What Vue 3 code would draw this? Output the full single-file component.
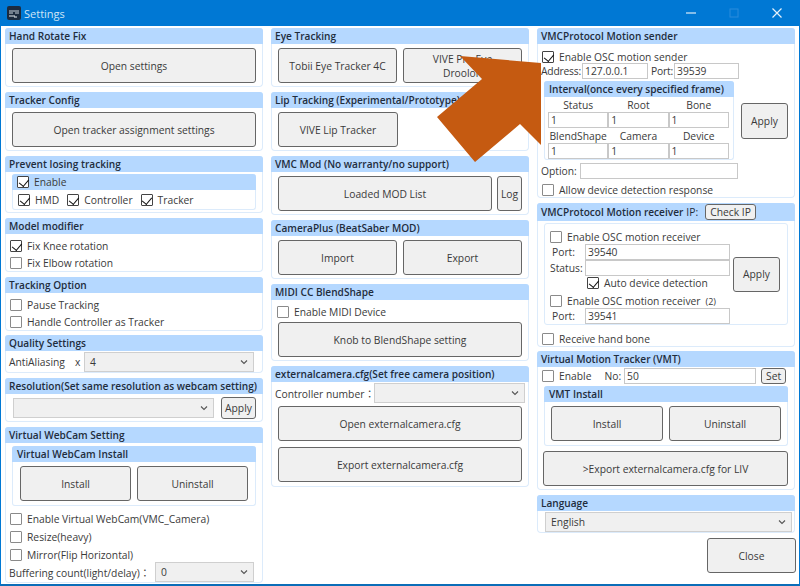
<script setup>
const intervals = [
  { label: 'Status', value: '1' },
  { label: 'Root', value: '1' },
  { label: 'Bone', value: '1' },
  { label: 'BlendShape', value: '1' },
  { label: 'Camera', value: '1' },
  { label: 'Device', value: '1' }
]
</script>

<template>
  <div class="window">
    <div class="titlebar">
      <div class="app-icon">
        <svg width="14" height="14" viewBox="0 0 14 14">
          <rect width="14" height="14" rx="2" fill="#1c2b3f" />
          <path d="M2 5h10M2 7h4M8 7h4" stroke="#c9d3dd" stroke-width="1" />
          <path d="M3 9v2M5 9v2M7 9v2h3" stroke="#e8eef3" stroke-width="1" fill="none" />
        </svg>
      </div>
      <span class="title">Settings</span>
      <div class="win-btns">
        <svg width="12" height="12" viewBox="0 0 12 12"><path d="M1 6h10" stroke="#dcebf7" stroke-width="1.2" /></svg>
        <svg width="12" height="12" viewBox="0 0 12 12"><rect x="2" y="2" width="8" height="8" fill="none" stroke="#2a8bdb" stroke-width="1" /></svg>
        <svg width="12" height="12" viewBox="0 0 12 12"><path d="M1.5 1.5l9 9M10.5 1.5l-9 9" stroke="#e6f1fa" stroke-width="1.2" /></svg>
      </div>
    </div>

    <div class="columns">
      <div class="column">
        <section class="card">
          <h3 class="head">Hand Rotate Fix</h3>
          <div class="body"><button class="btn">Open settings</button></div>
        </section>
        <section class="card">
          <h3 class="head">Tracker Config</h3>
          <div class="body"><button class="btn">Open tracker assignment settings</button></div>
        </section>
        <section class="card prevent">
          <h3 class="head">Prevent losing tracking</h3>
          <div class="body tight">
            <div class="group">
              <div class="head sub"><label class="chk"><input type="checkbox" checked />Enable</label></div>
              <div class="chk-row">
                <label class="chk"><input type="checkbox" checked />HMD</label>
                <label class="chk"><input type="checkbox" checked />Controller</label>
                <label class="chk"><input type="checkbox" checked />Tracker</label>
              </div>
            </div>
          </div>
        </section>
        <section class="card">
          <h3 class="head">Model modifier</h3>
          <div class="body rows">
            <label class="chk"><input type="checkbox" checked />Fix Knee rotation</label>
            <label class="chk"><input type="checkbox" />Fix Elbow rotation</label>
          </div>
        </section>
        <section class="card">
          <h3 class="head">Tracking Option</h3>
          <div class="body rows">
            <label class="chk"><input type="checkbox" />Pause Tracking</label>
            <label class="chk"><input type="checkbox" />Handle Controller as Tracker</label>
          </div>
        </section>
        <section class="card quality">
          <h3 class="head">Quality Settings</h3>
          <div class="aa-row">
            <span class="aa-label">AntiAliasing</span>
            <span class="aa-x">x</span>
            <div class="select aa-select">
              <span>4</span>
              <svg width="8" height="6" viewBox="0 0 8 6"><path d="M1 1.5l3 3 3-3" fill="none" stroke="#555" stroke-width="1.1" /></svg>
            </div>
          </div>
        </section>
        <section class="card">
          <h3 class="head">Resolution(Set same resolution as webcam setting)</h3>
          <div class="res-row">
            <div class="select res-select">
              <span></span>
              <svg width="8" height="6" viewBox="0 0 8 6"><path d="M1 1.5l3 3 3-3" fill="none" stroke="#555" stroke-width="1.1" /></svg>
            </div>
            <button class="btn small res-apply">Apply</button>
          </div>
        </section>
        <section class="card">
          <h3 class="head">Virtual WebCam Setting</h3>
          <div class="cam-body">
            <div class="group">
              <div class="head sub">Virtual WebCam Install</div>
              <div class="btn-pair">
                <button class="btn">Install</button>
                <button class="btn">Uninstall</button>
              </div>
            </div>
            <div class="cam-rows">
              <label class="chk"><input type="checkbox" />Enable Virtual WebCam(VMC_Camera)</label>
              <label class="chk"><input type="checkbox" />Resize(heavy)</label>
              <label class="chk"><input type="checkbox" />Mirror(Flip Horizontal)</label>
            </div>
            <div class="buffer-row">
              <span>Buffering count(light/delay)：</span>
              <div class="select buffer-select">
                <span>0</span>
                <svg width="8" height="6" viewBox="0 0 8 6"><path d="M1 1.5l3 3 3-3" fill="none" stroke="#555" stroke-width="1.1" /></svg>
              </div>
            </div>
          </div>
        </section>
      </div>

      <div class="column">
        <section class="card">
          <h3 class="head">Eye Tracking</h3>
          <div class="body btn-pair">
            <button class="btn">Tobii Eye Tracker 4C</button>
            <button class="btn">VIVE Pro Eye<br />Droolon</button>
          </div>
        </section>
        <section class="card">
          <h3 class="head">Lip Tracking (Experimental/Prototype)</h3>
          <div class="body btn-pair">
            <button class="btn">VIVE Lip Tracker</button>
            <div class="spacer"></div>
          </div>
        </section>
        <section class="card">
          <h3 class="head">VMC Mod (No warranty/no support)</h3>
          <div class="body mod-row">
            <button class="btn">Loaded MOD List</button>
            <button class="btn log-btn">Log</button>
          </div>
        </section>
        <section class="card">
          <h3 class="head">CameraPlus (BeatSaber MOD)</h3>
          <div class="body btn-pair">
            <button class="btn">Import</button>
            <button class="btn">Export</button>
          </div>
        </section>
        <section class="card">
          <h3 class="head">MIDI CC BlendShape</h3>
          <div class="body midi-body">
            <label class="chk midi-chk"><input type="checkbox" />Enable MIDI Device</label>
            <button class="btn">Knob to BlendShape setting</button>
          </div>
        </section>
        <section class="card">
          <h3 class="head">externalcamera.cfg(Set free camera position)</h3>
          <div class="ext-body">
            <div class="ext-row">
              <span class="ext-label">Controller number：</span>
              <div class="select ext-select">
                <span></span>
                <svg width="8" height="6" viewBox="0 0 8 6"><path d="M1 1.5l3 3 3-3" fill="none" stroke="#555" stroke-width="1.1" /></svg>
              </div>
            </div>
            <button class="btn">Open externalcamera.cfg</button>
            <button class="btn">Export externalcamera.cfg</button>
          </div>
        </section>
      </div>

      <div class="column">
        <section class="card">
          <h3 class="head">VMCProtocol Motion sender</h3>
          <div class="sender">
            <label class="chk sender-chk"><input type="checkbox" checked />Enable OSC motion sender</label>
            <div class="addr-row">
              <span>Address:</span>
              <input class="field addr" value="127.0.0.1" />
              <span class="port-label">Port:</span>
              <input class="field port" value="39539" />
            </div>
            <div class="interval-row">
              <div class="group interval">
                <div class="head sub">Interval(once every specified frame)</div>
                <div class="interval-grid">
                  <div v-for="item in intervals" :key="item.label" class="interval-item">
                    <span>{{ item.label }}</span>
                    <input class="field" :value="item.value" />
                  </div>
                </div>
              </div>
              <button class="btn small apply">Apply</button>
            </div>
            <div class="option-row">
              <span>Option:</span>
              <input class="field option" />
            </div>
            <label class="chk sender-chk"><input type="checkbox" />Allow device detection response</label>
          </div>
        </section>

        <section class="card">
          <h3 class="head recv-head">
            <span>VMCProtocol Motion receiver</span>
            <span class="ip-label">IP:</span>
            <button class="btn small check-ip">Check IP</button>
          </h3>
          <div class="sender">
            <div class="group recv">
              <div class="recv-left">
                <label class="chk"><input type="checkbox" />Enable OSC motion receiver</label>
                <div class="recv-field"><span>Port:</span><input class="field" value="39540" /></div>
                <div class="recv-field status"><span>Status:</span><input class="field" /></div>
                <label class="chk auto"><input type="checkbox" checked />Auto device detection</label>
                <label class="chk second"><input type="checkbox" />Enable OSC motion receiver<small>(2)</small></label>
                <div class="recv-field"><span>Port:</span><input class="field" value="39541" /></div>
              </div>
              <button class="btn small recv-apply">Apply</button>
            </div>
            <label class="chk sender-chk hand"><input type="checkbox" />Receive hand bone</label>
          </div>
        </section>

        <section class="card vmt">
          <h3 class="head">Virtual Motion Tracker (VMT)</h3>
          <div class="sender vmt-body">
            <div class="vmt-row">
              <label class="chk"><input type="checkbox" />Enable</label>
              <span class="no-label">No:</span>
              <input class="field" value="50" />
              <button class="btn small set">Set</button>
            </div>
            <div class="group vmt-group">
              <div class="head sub">VMT Install</div>
              <div class="btn-pair">
                <button class="btn">Install</button>
                <button class="btn">Uninstall</button>
              </div>
            </div>
            <button class="btn liv">&gt;Export externalcamera.cfg for LIV</button>
          </div>
        </section>

        <section class="card">
          <h3 class="head">Language</h3>
          <div class="lang">
            <div class="select">
              <span>English</span>
              <svg width="8" height="6" viewBox="0 0 8 6"><path d="M1 1.5l3 3 3-3" fill="none" stroke="#555" stroke-width="1.1" /></svg>
            </div>
          </div>
        </section>

        <div class="close-row">
          <button class="btn close">Close</button>
        </div>
      </div>
    </div>

    <!-- annotation arrow laid over the window -->
    <svg class="arrow" width="800" height="586" viewBox="0 0 800 586">
      <polygon points="460,56 541,63 541,145 520,124 475,162 437,117 482,79" fill="#c55a11" />
    </svg>
  </div>
</template>

<style>
html,
body {
  margin: 0;
  background: #fff;
}
</style>

<style scoped>
* {
  box-sizing: border-box;
}

.window {
  position: relative;
  width: 800px;
  height: 586px;
  overflow: hidden;
  background: #fff;
  border-left: 1px solid #0078d4;
  border-right: 1px solid #0078d4;
  border-bottom: 2px solid #0b6db8;
  font-family: 'Open Sans', 'Noto Sans CJK JP', sans-serif;
  font-size: 10.3px;
  color: #3a3a3a;
}

.titlebar {
  display: flex;
  align-items: center;
  height: 26px;
  margin: 0 -1px;
  padding-left: 7px;
  background: #0078d4;
}

.app-icon {
  display: flex;
  width: 14px;
  height: 14px;
}

.title {
  margin-left: 3px;
  font-size: 11px;
  color: #cfe5f6;
}

.win-btns {
  display: flex;
  gap: 31px;
  margin-left: auto;
  padding-right: 17px;
}

.columns {
  display: flex;
  gap: 8px;
  padding: 2px 0 0 4px;
}

.column {
  display: flex;
  flex-direction: column;
  gap: 5px;
  width: 258px;
}

.card {
  border: 1px solid #dcebfb;
  border-top: none;
  border-radius: 4px;
}

.head {
  height: 16px;
  margin: 0 -1px;
  padding-left: 4px;
  background: #b5d8ff;
  font-size: 10.1px;
  font-weight: 600;
  line-height: 16px;
  color: #1f2d3d;
  border-radius: 3px 3px 0 0;
  white-space: nowrap;
}

.body {
  padding: 4px 6px 3px;
}

.body.tight {
  padding: 2px 6px 2px;
}

.body.rows {
  display: flex;
  flex-direction: column;
  padding: 3px 3px 0 4px;
}

.rows .chk {
  height: 18px;
}

.rows .chk:last-child {
  height: 16px;
}

.btn {
  display: block;
  width: 100%;
  height: 35px;
  padding: 0;
  border: 1px solid #666;
  border-radius: 3px;
  background: #f0f0f0;
  font: inherit;
  line-height: 14px;
  color: #3a3a3a;
}

.btn-pair {
  display: flex;
  gap: 6px;
}

.btn-pair > * {
  flex: 1 1 0;
}

.chk {
  display: flex;
  align-items: center;
  white-space: nowrap;
}

.chk input {
  position: relative;
  flex: none;
  width: 12px;
  height: 12px;
  margin: 0 5px 0 0;
  border: 1px solid #8a8a8a;
  border-radius: 1px;
  background: #fff;
  appearance: none;
}

.chk input:checked {
  border-color: #444;
}

.chk input:checked::after {
  content: '';
  position: absolute;
  left: 2.5px;
  top: 0;
  width: 4.5px;
  height: 8px;
  border-right: 1.8px solid #111;
  border-bottom: 1.8px solid #111;
  transform: rotate(40deg);
}

.group {
  border: 1px solid #dcebfb;
  border-top: none;
  border-radius: 3px;
}

.head.sub {
  padding-left: 5px;
}

.head.sub .chk {
  height: 16px;
  font-size: 10.3px;
  font-weight: 400;
  color: #3a3a3a;
}

.chk-row {
  display: flex;
  gap: 8px;
  align-items: center;
  height: 19px;
  padding-left: 5px;
}

.group .btn-pair {
  padding: 4px 7px;
}

.select {
  display: flex;
  align-items: center;
  justify-content: space-between;
  height: 20px;
  padding: 0 5px;
  border: 1px solid #cfcfcf;
  background: #f0f0f0;
}

.quality {
  margin-top: -1px;
}

.aa-row {
  display: flex;
  align-items: center;
  height: 21px;
  padding: 0 8px 0 3px;
}

.aa-label {
  width: 66px;
}

.aa-x {
  width: 9px;
}

.aa-select {
  flex: 1;
}

.res-row {
  display: flex;
  align-items: center;
  gap: 7px;
  padding: 3px 6px 2px 7px;
}

.res-select {
  width: 201px;
}

.res-apply {
  width: 35px;
  height: 22px;
}

.cam-body {
  padding: 3px 6px 0;
}

.cam-rows {
  display: flex;
  flex-direction: column;
  margin: 4px 0 0 -2px;
}

.cam-rows .chk {
  height: 18px;
}

.buffer-row {
  display: flex;
  align-items: center;
  justify-content: space-between;
  margin: -2px 2px 0 -3px;
}

.buffer-select {
  width: 99px;
}

.spacer {
  visibility: hidden;
}

.mod-row {
  display: flex;
  gap: 5px;
}

.log-btn {
  flex: none;
  width: 25px;
}

.midi-body {
  padding-top: 5px;
}

.midi-chk {
  height: 14px;
  margin: 0 0 3px -1px;
}

.ext-body {
  display: flex;
  flex-direction: column;
  gap: 6px;
  padding: 1px 6px 4px;
}

.ext-row {
  display: flex;
  align-items: center;
  margin: 0 -3px -3px -3px;
}

.ext-label {
  flex: none;
  width: 99px;
  white-space: nowrap;
}

.ext-select {
  flex: 1;
}

.sender {
  padding: 6px 6px 0;
}

.sender-chk {
  margin-left: -2px;
  height: 14px;
}

.field {
  display: block;
  width: 100%;
  height: 16px;
  padding: 0 2px;
  border: 1px solid #c8c8c8;
  background: #fff;
  font: inherit;
  color: #3a3a3a;
  outline: none;
}

.addr-row {
  display: flex;
  align-items: center;
  margin: -1px 0 2px -3px;
}

.addr-row span {
  letter-spacing: -0.2px;
}

.addr {
  width: 66px;
  margin-left: 1px;
}

.port-label {
  margin: 0 1px 0 3px;
}

.port {
  width: 65px;
}

.interval-row {
  display: flex;
  align-items: center;
  gap: 7px;
}

.interval {
  width: 190px;
}

.interval-grid {
  display: grid;
  grid-template-columns: repeat(3, 60.3px);
  padding: 0 3px;
}

.interval-item {
  display: flex;
  flex-direction: column;
  align-items: center;
}

.interval-item span {
  height: 15px;
  line-height: 16px;
}

.apply {
  width: 47px;
  height: 36px;
}

.option-row {
  display: flex;
  align-items: center;
  justify-content: space-between;
  width: 197px;
  margin: 3px 0 4px -3px;
}

.option {
  width: 158px;
}

.recv-head {
  display: flex;
  align-items: center;
  height: 18px;
}

.ip-label {
  margin-left: 3px;
  font-size: 10.3px;
  font-weight: 400;
}

.check-ip {
  width: 51px;
  height: 16px;
  margin-left: 7px;
  border-radius: 3px;
  font-size: 10.3px;
  font-weight: 400;
  line-height: 13px;
}

.recv {
  display: flex;
  align-items: center;
  gap: 3px;
  height: 102px;
  margin-top: -4px;
  padding-left: 5px;
  border: 1px solid #dcebfb;
}

.recv-left {
  align-self: flex-start;
  width: 180px;
  margin-top: 6px;
}

.recv-field {
  display: flex;
  align-items: center;
}

.recv-field span {
  flex: none;
  width: 35px;
  padding-left: 2px;
}

.recv-field.status span {
  padding-left: 0;
}

.recv-left .chk {
  height: 14px;
}

.auto {
  margin-left: 37px;
}

.second {
  margin-top: 4px;
}

.second small {
  margin-left: 5px;
  font-size: 9px;
}

.recv-apply {
  width: 47px;
  height: 35px;
}

.hand {
  margin-top: 7px;
}

.vmt {
  margin-top: -1px;
}

.vmt-body {
  padding-bottom: 3px;
}

.vmt-row {
  display: flex;
  align-items: center;
  margin: -5px 1px 2px -2px;
}

.vmt-row .field {
  width: 132px;
}

.no-label {
  margin: 0 3px 0 13px;
}

.set {
  flex: none;
  width: 25px;
  height: 16px;
  margin-left: 5px;
  line-height: 13px;
}

.vmt-group .btn-pair {
  padding: 4px 6px;
}

.liv {
  margin: 5px 0 0 -1px;
  width: 245px;
}

.lang {
  padding: 1px 2px 0 7px;
}

.close-row {
  display: flex;
  justify-content: flex-end;
}

.close {
  width: 89px;
  margin-right: -1px;
}

.arrow {
  position: absolute;
  left: -1px;
  top: 0;
  pointer-events: none;
}
</style>
